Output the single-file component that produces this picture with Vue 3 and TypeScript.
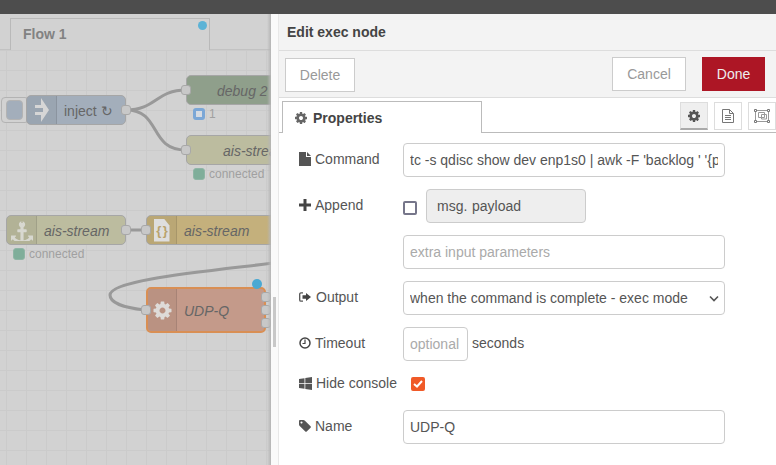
<script setup lang="ts">
import { ref } from 'vue'

const command = ref("tc -s qdisc show dev enp1s0 | awk -F 'backlog ' '{print $2}'")
const nodeName = ref('UDP-Q')

const cog =
  'M1152 896q0-106-75-181t-181-75-181 75-75 181 75 181 181 75 181-75 75-181zm512-109v222q0 12-8 23t-20 13l-185 28q-19 54-39 91 35 50 107 138 10 12 10 25t-9 23q-27 37-99 108t-94 71q-12 0-26-9l-138-108q-44 23-91 38-16 136-29 186-7 28-36 28h-222q-14 0-24.500-8.500t-11.500-21.500l-28-184q-49-16-90-37l-141 107q-10 9-25 9-14 0-25-11-126-114-165-168-7-10-7-23 0-12 8-23 15-21 51-66.500t54-70.500q-27-50-41-99l-183-27q-13-2-21-12.500t-8-23.500v-222q0-12 8-23t19-13l186-28q14-46 39-92-40-57-107-138-10-12-10-24 0-10 9-23 26-36 98.500-107.500t94.500-71.500q13 0 26 10l138 107q44-23 91-38 16-136 29-186 7-28 36-28h222q14 0 24.500 8.500t11.500 21.500l28 184q49 16 90 37l142-107q9-9 24-9 13 0 25 10 129 119 165 170 7 8 7 22 0 12-8 23-15 21-51 66.500t-54 70.500q26 50 41 98l183 28q13 2 21 12.500t8 23.500z'
const anchor =
  'M960 256q0-26-19-45t-45-19-45 19-19 45 19 45 45 19 45-19 19-45zm832 1120v352q0 22-20 30-8 2-12 2-12 0-23-9l-93-93q-119 143-318.500 226.500t-429.500 83.500-429.500-83.500-318.500-226.500l-93 93q-9 9-23 9-4 0-12-2-20-8-20-30v-352q0-14 9-23t23-9h352q22 0 30 20 8 19-7 35l-100 100q67 91 189.500 153.500t271.500 82.500v-647h-192q-26 0-45-19t-19-45v-128q0-26 19-45t45-19h192v-163q-58-34-93-92.500t-35-128.500q0-106 75-181t181-75 181 75 75 181q0 70-35 128.500t-93 92.500v163h192q26 0 45 19t19 45v128q0 26-19 45t-45 19h-192v647q149-20 271.500-82.500t189.500-153.500l-100-100q-15-16-7-35 8-20 30-20h352q14 0 23 9t9 23z'
const tag =
  'M576 448q0-53-37.500-90.500t-90.500-37.500-90.500 37.500-37.500 90.500 37.500 90.500 90.500 37.500 90.500-37.500 37.500-90.500zm1067 576q0 53-37 90l-491 492q-39 37-91 37-53 0-90-37l-715-716q-38-37-64.500-101t-26.500-117v-416q0-52 38-90t90-38h416q53 0 117 26.500t102 64.500l715 714q37 39 37 91z'

interface FlowNode {
  x: number
  y: number
  w: number
  h: number
  kind: string
  label: string
  labelX: number
  border: number
  icon?: 'arrow' | 'anchor' | 'json' | 'cog'
  inPorts: number[]
  outPorts: number[]
}

const nodes: FlowNode[] = [
  { x: 26, y: 95, w: 100, h: 30, kind: 'inject', label: 'inject ↻', labelX: 37, border: 1, icon: 'arrow', inPorts: [], outPorts: [15] },
  { x: 186, y: 75, w: 100, h: 30, kind: 'debug', label: 'debug 2', labelX: 30, border: 1, inPorts: [15], outPorts: [] },
  { x: 186, y: 135, w: 100, h: 30, kind: 'mqtt', label: 'ais-stream', labelX: 36, border: 1, inPorts: [15], outPorts: [] },
  { x: 6, y: 215, w: 120, h: 30, kind: 'mqtt', label: 'ais-stream', labelX: 37, border: 1, icon: 'anchor', inPorts: [], outPorts: [15] },
  { x: 146, y: 215, w: 140, h: 30, kind: 'json', label: 'ais-stream', labelX: 37, border: 1, icon: 'json', inPorts: [15], outPorts: [] },
  { x: 146, y: 287, w: 120, h: 46, kind: 'exec', label: 'UDP-Q', labelX: 36, border: 2, icon: 'cog', inPorts: [23], outPorts: [10, 23, 36] }
]

const statuses = [
  { x: 193, y: 107, cls: 'ring', text: '1' },
  { x: 193, y: 167, cls: 'green', text: 'connected' },
  { x: 13, y: 247, cls: 'green', text: 'connected' }
]
</script>

<template>
  <div class="app">
    <div class="topbar"></div>
    <div class="main">
      <section class="workspace">
        <div class="flow-tabs">
          <div class="flow-tab">
            Flow 1
            <span class="tab-dot"></span>
          </div>
        </div>

        <div class="canvas">
          <svg class="wires" width="300" height="415" viewBox="0 50 300 415">
            <path d="M126 110C156 110 156 90 186 90" />
            <path d="M126 110C162 110 148 150 186 150" />
            <path d="M126 230H146" />
            <path d="M145 310C125 308 110 303 110 295C110 280 200 272 274 263" />
          </svg>

          <div class="inject-button"><span></span></div>

          <div
            v-for="n in nodes"
            :key="n.kind + n.x + n.y"
            class="node"
            :class="n.kind"
            :style="{ left: n.x + 'px', top: n.y - 50 + 'px', width: n.w + 'px', height: n.h + 'px' }"
          >
            <div v-if="n.icon" class="node-icon">
              <svg v-if="n.icon === 'arrow'" width="16" height="26" viewBox="0 0 16 26">
                <path d="M1 8h6V1l8 12-8 12v-7H1v-3h8v-4H1z" fill="#d6d6d6" />
              </svg>
              <svg v-else-if="n.icon === 'anchor'" width="22" height="22" viewBox="0 0 1792 1792">
                <path :d="anchor" fill="#d8d8d0" />
              </svg>
              <div v-else-if="n.icon === 'json'" class="json-doc">{ }</div>
              <svg v-else width="21" height="21" viewBox="0 0 1792 1792">
                <path :d="cog" fill="#dedbd8" />
              </svg>
            </div>
            <span class="node-label" :class="{ plain: n.kind === 'inject' }" :style="{ left: n.labelX + 'px' }">{{ n.label }}</span>
            <span v-for="p in n.inPorts" :key="'i' + p" class="port in" :style="{ top: p - 5 - n.border + 'px' }"></span>
            <span v-for="p in n.outPorts" :key="'o' + p" class="port out" :style="{ top: p - 5 - n.border + 'px' }"></span>
          </div>

          <div
            v-for="s in statuses"
            :key="s.x + '-' + s.y"
            class="status"
            :style="{ left: s.x + 'px', top: s.y - 50 + 'px' }"
          >
            <span class="status-dot" :class="s.cls"></span>
            <span>{{ s.text }}</span>
          </div>

          <span class="changed-dot"></span>
        </div>
        <div class="edge-shade"></div>
      </section>

      <aside class="tray">
        <div class="tray-handle"><span></span></div>
        <div class="tray-panel">
          <header class="tray-title">Edit exec node</header>

          <div class="tray-toolbar">
            <button class="btn delete">Delete</button>
            <button class="btn cancel">Cancel</button>
            <button class="btn done">Done</button>
          </div>

          <div class="tray-tabs">
            <div class="prop-tab">
              <svg width="14" height="14" viewBox="0 0 1792 1792"><path :d="cog" fill="#666" /></svg>
              Properties
            </div>
            <div class="tab-icons">
              <button class="icon-btn active">
                <svg width="14" height="14" viewBox="0 0 1792 1792"><path :d="cog" fill="#555" /></svg>
              </button>
              <button class="icon-btn">
                <svg width="12" height="14" viewBox="0 0 12 14" fill="none" stroke="#777">
                  <path d="M.5.5h7l4 4v9H.5zM7.500.5v4h4M3 6.500h6M3 8.500h6M3 10.500h6" />
                </svg>
              </button>
              <button class="icon-btn">
                <svg width="16" height="14" viewBox="0 0 16 14" fill="none" stroke="#999">
                  <path d="M1.500 1.500h13v11h-13zM4.500 3.500h6v5h-6zM7.500 5.500h5v4.500h-5z" />
                  <path d="M.5.5h2v2h-2zM13.500.5h2v2h-2zM.5 11.500h2v2h-2zM13.500 11.500h2v2h-2z" fill="#fff" stroke="#777" />
                </svg>
              </button>
            </div>
          </div>

          <form class="form" @submit.prevent>
            <div class="row">
              <label class="label">
                <svg width="12" height="14" viewBox="0 0 12 14" fill="#555"><path d="M0 0h7v5h5v9H0zM8 0l4 4H8z" /></svg>
                Command
              </label>
              <input class="field wide" type="text" :value="command" />
            </div>

            <div class="row">
              <label class="label">
                <svg width="12" height="12" viewBox="0 0 12 12" fill="#444"><path d="M4.500 0h3v4.500H12v3H7.500V12h-3V7.500H0v-3h4.500z" /></svg>
                Append
              </label>
              <span class="check"></span>
              <div class="msg-box"><span class="msg-prefix">msg.</span><span>payload</span></div>
            </div>

            <div class="row no-label">
              <input class="field wide" type="text" placeholder="extra input parameters" />
            </div>

            <div class="row">
              <label class="label">
                <svg class="output-icon" width="12" height="10" viewBox="0 0 12 10">
                  <path d="M4 .8H2A1.300 1.300 0 0 0 .7 2.100v5.800A1.300 1.300 0 0 0 2 9.200h2" fill="none" stroke="#555" stroke-width="1.300" />
                  <path d="M7 1l5 4-5 4V6.800H3.500V3.200H7z" fill="#444" />
                </svg>
                Output
              </label>
              <div class="select-wrap">
                <select class="field wide select">
                  <option>when the command is complete - exec mode</option>
                </select>
                <svg class="chevron" width="10" height="7" viewBox="0 0 10 7" fill="none" stroke="#555" stroke-width="1.600">
                  <path d="M1 1.500l4 4 4-4" />
                </svg>
              </div>
            </div>

            <div class="row">
              <label class="label">
                <svg width="12" height="12" viewBox="0 0 12 12" fill="none" stroke="#444">
                  <circle cx="6" cy="6" r="5" stroke-width="1.500" />
                  <path d="M6 2.500V6.500H3.500" stroke-width="1.200" />
                </svg>
                Timeout
              </label>
              <input class="field short" type="text" placeholder="optional" />
              <span class="suffix">seconds</span>
            </div>

            <div class="row compact">
              <label class="label long">
                <svg width="13" height="13" viewBox="0 0 13 13" fill="#555">
                  <path d="M0 2l5.500-.8V6H0zM6.300 1.100L13 0v6H6.300zM0 6.800h5.500v4.900L0 11zM6.300 6.800H13V13l-6.700-1z" />
                </svg>
                Hide console
              </label>
              <span class="check on">
                <svg width="10" height="8" viewBox="0 0 10 8" fill="none" stroke="#fff" stroke-width="2"><path d="M1 4l3 2.500L9 1" /></svg>
              </span>
            </div>

            <div class="row">
              <label class="label">
                <svg class="tag-icon" width="14" height="14" viewBox="0 0 1792 1792"><path :d="tag" fill="#555" /></svg>
                Name
              </label>
              <input class="field wide" type="text" :value="nodeName" />
            </div>
          </form>
        </div>
      </aside>
    </div>
  </div>
</template>

<style>
html,
body {
  margin: 0;
  overflow: hidden;
}
</style>

<style scoped>
.app {
  width: 776px;
  height: 465px;
  display: flex;
  flex-direction: column;
  overflow: hidden;
  font-family: "Liberation Sans", Arial, sans-serif;
  font-size: 14px;
  color: #555;
}

.topbar {
  height: 14px;
  flex: none;
  background: #4d4d4d;
}

.main {
  flex: 1;
  display: flex;
  min-height: 0;
}

/* workspace */
.workspace {
  position: relative;
  width: 271px;
  flex: none;
  display: flex;
  flex-direction: column;
  background: #d2d2d2;
  overflow: hidden;
}

.flow-tabs {
  height: 36px;
  flex: none;
  box-sizing: border-box;
  padding: 4px 0 0 10px;
  border-bottom: 1px solid #c2c2c2;
}

.flow-tab {
  position: relative;
  width: 200px;
  height: 32px;
  box-sizing: border-box;
  padding: 7px 0 0 12px;
  border: 1px solid #b9b9b9;
  border-bottom: none;
  background: #d2d2d2;
  color: #828282;
  font-weight: bold;
}

.tab-dot {
  position: absolute;
  top: 2px;
  right: 2px;
  width: 9px;
  height: 9px;
  border-radius: 50%;
  background: #5cb3d6;
}

.canvas {
  position: relative;
  flex: 1;
  background-color: #d2d2d2;
  background-image:
    linear-gradient(to right, #cbcbcb 1px, transparent 1px),
    linear-gradient(to bottom, #cbcbcb 1px, transparent 1px);
  background-size: 20px 20px;
  background-position: 6px 0;
}

.wires {
  position: absolute;
  left: 0;
  top: 0;
  fill: none;
  stroke: #999;
  stroke-width: 3;
}

.edge-shade {
  position: absolute;
  top: 0;
  right: 0;
  bottom: 0;
  width: 4px;
  background: linear-gradient(to right, rgba(150, 150, 150, 0), #b5b5b5);
}

.inject-button {
  position: absolute;
  left: 1px;
  top: 47px;
  width: 28px;
  height: 26px;
  box-sizing: border-box;
  padding: 2px 0 0 4px;
  border: 1px solid #b3b3b3;
  border-radius: 4px;
  background: #d2d2d2;
}

.inject-button span {
  display: block;
  width: 17px;
  height: 20px;
  box-sizing: border-box;
  border-radius: 4px;
  background: #a3aebb;
  border: 1px solid #b3b3b3;
}

.node {
  position: absolute;
  box-sizing: border-box;
  border: 1px solid #a6a6a6;
  border-radius: 5px;
  color: #666;
}

.node.inject {
  background: #a3aebb;
}

.node.debug {
  background: #8f9f8b;
}

.node.mqtt {
  background: #bcbc9f;
}

.node.json {
  background: #c4b07c;
}

.node.exec {
  background: #c49a8a;
  border: 2px solid #d98f54;
}

.node-icon {
  position: absolute;
  left: 0;
  top: 0;
  bottom: 0;
  width: 29px;
  display: flex;
  align-items: center;
  justify-content: center;
  background: rgba(0, 0, 0, 0.05);
  border-right: 1px solid rgba(0, 0, 0, 0.1);
  border-radius: 4px 0 0 4px;
}

.exec .node-icon {
  width: 28px;
}

.json-doc {
  width: 16px;
  height: 23px;
  background: #dedede;
  clip-path: polygon(0 0, 65% 0, 100% 30%, 100% 100%, 0 100%);
  color: #b9a36c;
  font-size: 13px;
  font-weight: bold;
  line-height: 23px;
  letter-spacing: -1px;
  text-align: center;
}

.node-label {
  position: absolute;
  top: 50%;
  transform: translateY(calc(-50% + 1px));
  font-style: italic;
  white-space: nowrap;
}

.node-label.plain {
  font-style: normal;
}

.port {
  position: absolute;
  width: 10px;
  height: 10px;
  box-sizing: border-box;
  border: 1px solid #a8a8a8;
  border-radius: 3px;
  background: #c8c8c8;
}

.port.in {
  left: -6px;
}

.port.out {
  right: -6px;
}

.exec .port.in {
  left: -7px;
}

.exec .port.out {
  right: -7px;
}

.status {
  position: absolute;
  display: flex;
  align-items: center;
  gap: 4px;
  font-size: 12px;
  color: #a0a0a0;
}

.status-dot {
  width: 12px;
  height: 12px;
  box-sizing: border-box;
  border-radius: 3px;
}

.status-dot.green {
  background: #7fae9a;
  border: 1px solid #8fb5a5;
}

.status-dot.ring {
  background: #d6dbe2;
  border: 3px solid #7ba7d6;
}

.changed-dot {
  position: absolute;
  left: 252px;
  top: 229px;
  width: 10px;
  height: 10px;
  border-radius: 50%;
  background: #4aa9d3;
}

/* tray */
.tray {
  flex: 1;
  display: flex;
  min-width: 0;
}

.tray-handle {
  position: relative;
  width: 7px;
  flex: none;
  background: #fafafa;
  border-right: 1px solid #e8e8e8;
}

.tray-handle span {
  position: absolute;
  left: 2px;
  top: 283px;
  width: 3px;
  height: 50px;
  background: #c8c8c8;
}

.tray-panel {
  flex: 1;
  min-width: 0;
  display: flex;
  flex-direction: column;
  background: #fff;
}

.tray-title {
  height: 37px;
  flex: none;
  box-sizing: border-box;
  padding: 10px 0 0 8px;
  background: #f3f3f3;
  border-bottom: 1px solid #ddd;
  color: #444;
  font-weight: bold;
}

.tray-toolbar {
  height: 47px;
  flex: none;
  box-sizing: border-box;
  display: flex;
  align-items: flex-start;
  padding: 6px 11px 0 6px;
  background: #f3f3f3;
  border-bottom: 1px solid #ddd;
}

.btn {
  height: 34px;
  box-sizing: border-box;
  border: 1px solid #ccc;
  background: #fff;
  color: #999;
  font: inherit;
  padding: 0;
}

.btn.delete {
  width: 70px;
  margin-top: 1px;
}

.btn.cancel {
  width: 74px;
  margin-left: auto;
}

.btn.done {
  width: 63px;
  margin-left: 16px;
  background: #ad1625;
  border-color: #ad1625;
  color: #eee;
}

.tray-tabs {
  height: 35px;
  flex: none;
  box-sizing: border-box;
  display: flex;
  justify-content: space-between;
  padding-left: 3px;
  background: linear-gradient(to bottom, transparent 34px, #bbb 34px);
}

.prop-tab {
  width: 200px;
  height: 32px;
  margin-top: 3px;
  box-sizing: border-box;
  display: flex;
  align-items: center;
  gap: 5px;
  padding-left: 11px;
  border: 1px solid #bbb;
  border-bottom: none;
  background: #fff;
  color: #444;
  font-weight: bold;
}

.tab-icons {
  display: flex;
  gap: 6px;
  padding-top: 4px;
}

.icon-btn {
  width: 28px;
  height: 28px;
  box-sizing: border-box;
  display: flex;
  align-items: center;
  justify-content: center;
  padding: 0;
  border: 1px solid #ddd;
  background: #fff;
}

.icon-btn.active {
  background: #efefef;
  border-bottom: 2px solid #aaa;
}

.form {
  padding: 10px 0 0 20px;
}

.row {
  display: flex;
  align-items: center;
  height: 34px;
  margin-bottom: 12px;
}

.row.no-label {
  padding-left: 104px;
}

.row.compact {
  height: 25px;
  align-items: flex-start;
}

.label {
  width: 104px;
  flex: none;
  display: flex;
  align-items: center;
  gap: 4px;
  padding-bottom: 2px;
  box-sizing: border-box;
  color: #555;
}

.label.long {
  width: 112px;
  height: 22px;
  white-space: nowrap;
}

.output-icon {
  margin-right: 1px;
}

.tag-icon {
  margin: 0 -1px;
}

.field {
  height: 34px;
  box-sizing: border-box;
  padding: 0 6px;
  border: 1px solid #ccc;
  border-radius: 4px;
  background: #fff;
  color: #555;
  font: inherit;
  outline: none;
}

.field::placeholder {
  color: #aaa;
  opacity: 1;
}

.field.wide {
  width: 322px;
}

.field.short {
  width: 65px;
}

.select-wrap {
  position: relative;
  display: flex;
}

.select {
  appearance: none;
}

.chevron {
  position: absolute;
  right: 6px;
  top: 14px;
  pointer-events: none;
}

.suffix {
  margin-left: 4px;
  padding-bottom: 2px;
}

.check {
  width: 14px;
  height: 14px;
  flex: none;
  box-sizing: border-box;
  display: flex;
  align-items: center;
  justify-content: center;
  margin-top: 4px;
  border: 2px solid #76768a;
  border-radius: 2px;
  background: #fff;
}

.check.on {
  border-color: #f05a28;
  background: #f05a28;
}

.msg-box {
  width: 160px;
  height: 34px;
  box-sizing: border-box;
  display: flex;
  align-items: center;
  margin-left: 9px;
  padding-left: 10px;
  border: 1px solid #ccc;
  border-radius: 4px;
  background: #eee;
}

.msg-prefix {
  width: 35px;
}
</style>
